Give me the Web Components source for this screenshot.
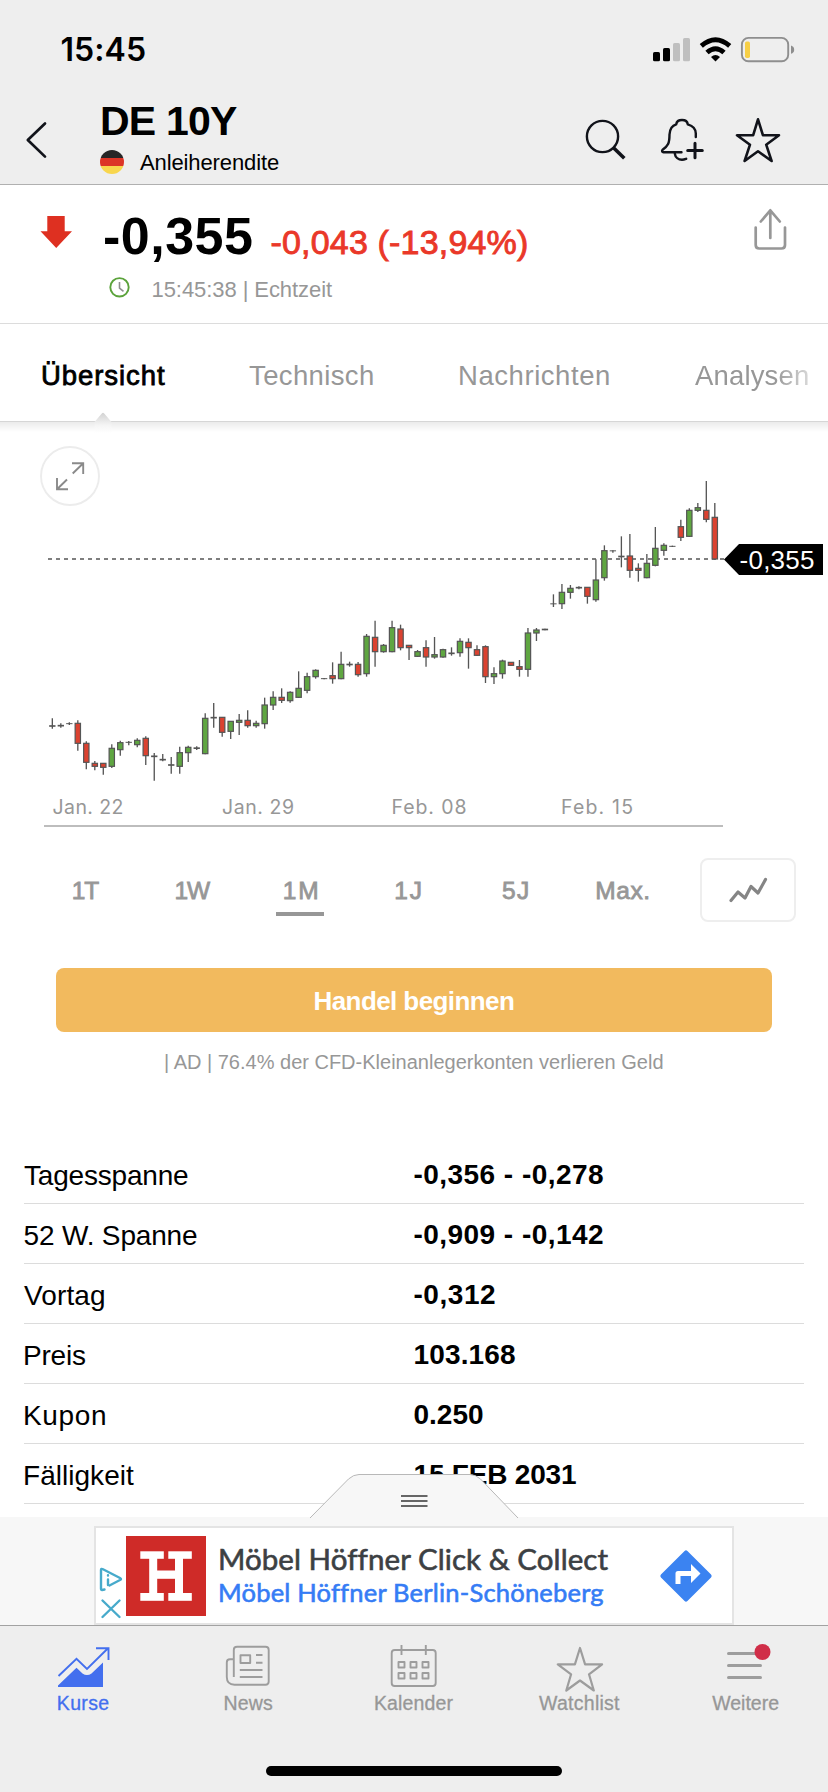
<!DOCTYPE html>
<html lang="de">
<head>
<meta charset="UTF-8">
<meta name="viewport" content="width=device-width">
<title>DE 10Y</title>
<style>
    body{
        margin: 0;
        background: #fff;
        font-family: "Liberation Sans", Arial, sans-serif;
        color: #000;
    }
</style>
</head>
<body>
<quote-app></quote-app>

<script>
// FIT TEXT: spaces one line of text so its ink fills the given width
class FitText extends HTMLElement{

    constructor(){
        super();
        this.attachShadow({mode: 'open'});
    }

    connectedCallback(){
        this.shadowRoot.innerHTML = `
            <style>
                :host{
                    display: block;
                    flex: none;
                    white-space: nowrap;
                }
                span{
                    display: inline-block;
                }
            </style>
            <span><slot></slot></span>
        `;
        this.fit();
    }

    fit(){
        const width = Number(this.getAttribute('width'));
        const text = this.textContent;
        const style = getComputedStyle(this);
        const ctx = document.createElement('canvas').getContext('2d');
        ctx.font = `${style.fontWeight} ${style.fontSize} ${style.fontFamily}`;
        const box = ctx.measureText(text);
        const left = box.actualBoundingBoxLeft / 2;
        const span = this.shadowRoot.querySelector('span');

        this.style.width = `${width}px`;
        span.style.letterSpacing = `${(width - left - box.actualBoundingBoxRight) / (text.length - 1)}px`;
        span.style.marginLeft = `${left}px`;
    }
}

window.customElements.define('fit-text', FitText);

// ----------------------------------------------------------

class StatusBar extends HTMLElement{

    constructor(){
        super();
        this.attachShadow({mode: 'open'});
    }

    connectedCallback(){
        this.shadowRoot.innerHTML = `
            <style>
                :host{
                    display: flex;
                    justify-content: space-between;
                    height: 80px;
                    padding-left: 61px;
                    box-sizing: border-box;
                }
                fit-text{
                    font: 600 32px/60px Inter, sans-serif;
                    padding-top: 20px;
                }
                svg{
                    display: block;
                }
            </style>
            <fit-text width="84">15:45</fit-text>
            <svg width="182" height="80" viewBox="646 0 182 80">
                <rect x="653" y="52" width="7" height="9.3" rx="1.6"/>
                <rect x="663" y="48" width="7" height="13.3" rx="1.6"/>
                <rect x="673" y="43" width="7" height="18.3" rx="1.6" fill="#bfbfbf"/>
                <rect x="683" y="38" width="7" height="23.3" rx="1.6" fill="#bfbfbf"/>
                <g fill="none" stroke="#000" stroke-width="4.8">
                    <path d="M701.3 45.9Q715.5 33.4 729.7 45.9"/>
                    <path d="M707 52.5Q715.5 44.8 724 52.5"/>
                </g>
                <path d="M711 57Q715.5 53 720 57L715.5 61.4Z"/>
                <rect x="741.9" y="37.9" width="46.3" height="23.4" rx="6.5" fill="none" stroke="#8e8e8e" stroke-width="1.9"/>
                <rect x="745" y="41.4" width="5" height="16.6" rx="1.8" fill="#f7cf46"/>
                <path d="M791 45.5Q794.2 46.5 794.2 49.7T791 53.7Z" fill="#8e8e8e"/>
            </svg>
        `;
    }
}

// STATUS BAR
window.customElements.define('status-bar', StatusBar);

// ----------------------------------------------------------

class NavHeader extends HTMLElement{

    constructor(){
        super();
        this.attachShadow({mode: 'open'});
    }

    connectedCallback(){
        this.shadowRoot.innerHTML = `
            <style>
                :host{
                    display: flex;
                    height: 105px;
                    box-sizing: border-box;
                    border-bottom: 1px solid #b0b0b0;
                }
                svg{
                    display: block;
                    flex: none;
                    fill: none;
                    stroke: #11131a;
                    stroke-linecap: round;
                    stroke-linejoin: round;
                }
                .title{
                    flex: 1;
                    padding-top: 18px;
                }
                h1{
                    margin: 0 0 5px;
                    font: bold 41px/46px "Liberation Sans", sans-serif;
                }
                .kind{
                    display: flex;
                    align-items: center;
                    gap: 16px;
                    height: 26px;
                    margin-left: -1px;
                    font-size: 22px;
                    line-height: 27px;
                }
                .flag{
                    width: 24px;
                    height: 24px;
                    border-radius: 50%;
                    background: linear-gradient(#262626 33%, #dc3527 33% 66%, #f8d64d 66%);
                }
            </style>
            <svg width="101" height="104" viewBox="0 80 101 104" stroke-width="2.7">
                <path d="M45 123.5L27.8 140L45 156.6"/>
            </svg>
            <div class="title">
                <h1><fit-text width="136">DE 10Y</fit-text></h1>
                <div class="kind">
                    <div class="flag"></div>
                    <fit-text width="139">Anleiherendite</fit-text>
                </div>
            </div>
            <svg width="248" height="104" viewBox="580 80 248 104" stroke-width="2.4">
                <circle cx="602.5" cy="136.5" r="15.6"/>
                <path d="M613.5 147.8L624.3 158.3" stroke-width="3.6" stroke-linecap="butt"/>
                <path d="M695.8 137V133.6C695.8 128.5 692.5 125.8 687.8 124.4C687.4 121.2 685 120 682 120S676.6 121.2 676.2 124.4C671.5 125.8 669.8 129.500 669.5 134.5C669.5 143.5 668 146 662.6 149.8C661.5 151.3 662.2 152.3 663.5 152.3H681.5"/>
                <path d="M674.8 153.5C675.3 157.5 678.5 159.8 682 159.8C684 159.8 685 159.3 686.2 158.8"/>
                <path d="M695 143.2V157.8M687.7 150.5H702.3" stroke-width="3"/>
                <path d="M758 119.3L762.9 135.2H779L766.2 144.7L771.6 161L758 151.3L744.6 161L750 144.7L737 135.2H753.2Z" stroke-width="2.6"/>
            </svg>
        `;
    }
}

// NAV HEADER
window.customElements.define('nav-header', NavHeader);

// ----------------------------------------------------------

class QuoteSummary extends HTMLElement{

    constructor(){
        super();
        this.attachShadow({mode: 'open'});
    }

    connectedCallback(){
        this.shadowRoot.innerHTML = `
            <style>
                :host{
                    display: flex;
                    height: 139px;
                    box-sizing: border-box;
                    border-bottom: 1px solid #dcdcdc;
                }
                svg{
                    display: block;
                    flex: none;
                }
                .data{
                    flex: 1;
                    padding-top: 21px;
                }
                .price{
                    display: flex;
                    align-items: baseline;
                    gap: 19px;
                    height: 60px;
                    line-height: 60px;
                }
                .last{
                    font-size: 52px;
                    font-weight: bold;
                }
                .change{
                    font-size: 34px;
                    color: #ea3829;
                    -webkit-text-stroke: .9px #ea3829;
                }
                .time{
                    display: flex;
                    align-items: center;
                    gap: 22px;
                    height: 26px;
                    margin: 10px 0 0 5px;
                    font-size: 22px;
                    line-height: 27px;
                    color: #979797;
                }
            </style>
            <svg width="104" height="138" viewBox="0 185 104 138">
                <path d="M47.3 216H64.7V231.3H72L56.2 248L40.5 231.3H47.3Z" fill="#de3021"/>
            </svg>
            <div class="data">
                <div class="price">
                    <fit-text class="last" width="148">-0,355</fit-text>
                    <fit-text class="change" width="256">-0,043 (-13,94%)</fit-text>
                </div>
                <div class="time">
                    <svg width="21" height="26" viewBox="109.5 276 21 26" fill="none" stroke-width="1.9">
                        <circle cx="120" cy="287.3" r="9.2" stroke="#5ba33b"/>
                        <path d="M120 282V288L124 291.300" stroke="#8f8f8f" stroke-width="1.6"/>
                    </svg>
                    <fit-text width="180">15:45:38 | Echtzeit</fit-text>
                </div>
            </div>
            <svg width="88" height="138" viewBox="740 185 88 138" fill="none" stroke="#979797" stroke-width="2.7" stroke-linecap="round" stroke-linejoin="round">
                <path d="M755.7 227.5V245Q755.7 248.5 759.200 248.5H781.500Q785 248.5 785 245V227.5"/>
                <path d="M770.3 238V210.5M760.8 221.500L770.3 210.3L779.8 221.5"/>
            </svg>
        `;
    }
}

// QUOTE SUMMARY
window.customElements.define('quote-summary', QuoteSummary);

// ----------------------------------------------------------

class SectionTabs extends HTMLElement{

    constructor(){
        super();
        this.attachShadow({mode: 'open'});
    }

    connectedCallback(){
        this.shadowRoot.innerHTML = `
            <style>
                :host{
                    display: flex;
                    position: relative;
                    height: 98px;
                    box-sizing: border-box;
                    padding: 36px 0 0 42px;
                    border-bottom: 1px solid #d6d6d6;
                    font-size: 27.5px;
                    line-height: 31px;
                    color: #979797;
                }
                fit-text{
                    margin-right: 86px;
                }
                .active{
                    color: #000;
                    -webkit-text-stroke: .8px #000;
                    margin-right: 84px;
                }
                .last{
                    margin: 0;
                    -webkit-mask-image: linear-gradient(to right, #000 70%, rgba(0, 0, 0, .4));
                    mask-image: linear-gradient(to right, #000 70%, rgba(0, 0, 0, .4));
                }
                svg{
                    position: absolute;
                    left: 93px;
                    top: 87px;
                    z-index: 1;
                }
            </style>
            <fit-text class="active" width="123">Übersicht</fit-text>
            <fit-text width="124">Technisch</fit-text>
            <fit-text width="150">Nachrichten</fit-text>
            <fit-text class="last" width="113">Analysen</fit-text>
            <svg width="20" height="22" viewBox="93 411 20 22">
                <linearGradient id="notch" x1="0" y1="0" x2="0" y2="1">
                    <stop offset="0" stop-color="#d2d2d2"/>
                    <stop offset=".6" stop-color="#f4f4f4"/>
                    <stop offset="1" stop-color="#fff"/>
                </linearGradient>
                <path d="M94.5 422L101.8 413.5Q103 412 104.2 413.5L111.5 422V433H94.5Z" fill="url(#notch)"/>
            </svg>
        `;
    }
}

// SECTION TABS
window.customElements.define('section-tabs', SectionTabs);

// ----------------------------------------------------------

// [index, high, body top, body bottom, low, kind], in thirds of a pixel from the chart top
const CANDLES = [
    [0,865,886,890,896,'d'], [1,880,885,889,893,'d'], [2,877,880,882,885,'t'], [3,871,880,940,962,'r'],
    [4,934,940,997,1018,'r'], [5,993,1000,1009,1021,'r'], [6,1000,1000,1012,1034,'r'], [7,943,955,1009,1014,'g'],
    [8,932,938,959,977,'g'], [9,933,936,938,946,'t'], [10,925,931,944,952,'g'], [11,919,925,977,1005,'r'],
    [12,969,977,981,1052,'d'], [13,972,987,991,994,'d'], [14,981,1003,1007,1031,'d'], [15,950,968,1009,1031,'g'],
    [16,947,952,968,996,'g'], [17,949,953,956,960,'d'], [18,850,865,971,973,'g'], [19,819,861,865,893,'d'],
    [20,862,862,907,920,'r'], [21,874,874,904,927,'g'], [22,852,871,877,915,'g'], [23,841,871,887,893,'r'],
    [24,872,880,887,893,'g'], [25,803,825,881,896,'g'], [26,784,802,825,840,'g'], [27,775,802,811,819,'r'],
    [28,784,787,812,818,'g'], [29,724,775,802,804,'g'], [30,728,740,781,790,'g'], [31,718,721,740,746,'g'],
    [32,744,745,747,748,'t'], [33,697,737,746,761,'r'], [34,665,703,746,748,'g'], [35,695,702,705,710,'d'],
    [36,696,703,734,740,'r'], [37,612,619,731,740,'g'], [38,572,622,665,710,'r'], [39,642,646,665,668,'g'],
    [40,572,593,665,667,'g'], [41,584,597,653,661,'r'], [42,646,646,653,690,'r'], [43,660,665,679,681,'g'],
    [44,631,653,681,710,'r'], [45,621,674,681,686,'g'], [46,656,659,681,683,'g'], [47,652,668,672,677,'d'],
    [48,625,634,668,680,'g'], [49,625,637,653,716,'r'], [50,646,659,676,678,'r'], [51,646,650,740,759,'r'],
    [52,712,731,740,762,'g'], [53,689,693,731,746,'g'], [54,697,697,706,708,'r'], [55,690,710,718,740,'r'],
    [56,594,609,718,740,'g'], [57,594,600,609,633,'g'], [58,596,596,601,601,'d'], [59,493,520,523,531,'t'],
    [60,462,487,521,537,'g'], [61,465,475,487,506,'g'], [62,469,471,475,478,'d'], [63,472,472,499,521,'r'],
    [64,388,450,509,515,'g'], [65,346,362,443,452,'g'], [66,361,361,364,368,'t'], [67,319,378,381,412,'d'],
    [68,312,378,421,443,'r'], [69,400,415,421,455,'r'], [70,372,400,443,445,'g'], [71,291,355,406,409,'g'],
    [72,340,346,361,377,'g'], [73,347,348,350,351,'t'], [74,269,290,322,333,'r'], [75,235,241,319,321,'g'],
    [76,219,233,241,246,'g'], [77,153,241,268,277,'r'], [78,219,262,387,389,'r']
];

class CandleChart extends HTMLElement{

    constructor(){
        super();
        this.attachShadow({mode: 'open'});
    }

    connectedCallback(){
        this.render(CANDLES.map(this.candle).join(''));
    }

    candle([index, high, top, bottom, low, kind]){
        const x = 157 + index * 25.48;
        const fill = {g: '#5fa641', r: '#db4230'}[kind];
        const wick = `<path d="M${x} ${high}V${low}" stroke-width="4"/>`;
        if(!fill){
            const size = kind === 't' ? 3 : 5;
            return `${wick}<path d="M${x - 9.5} ${(top + bottom) / 2}h19" stroke-width="${size}"/>`;
        }
        return `${wick}<rect x="${x - 8}" y="${top}" width="16" height="${bottom - top}" fill="${fill}" stroke-width="3.6"/>`;
    }

    render(candles){
        this.shadowRoot.innerHTML = `
            <style>
                :host{
                    display: block;
                    height: 436px;
                    background: linear-gradient(#ebebeb, #fff 10px);
                }
                svg{
                    display: block;
                }
                .dates{
                    font: 19.5px Inter, sans-serif;
                    fill: #979797;
                }
                .tag{
                    font: 26px "Liberation Sans", sans-serif;
                    fill: #fff;
                }
            </style>
            <svg width="828" height="436" viewBox="0 422 828 436">
                <circle cx="70" cy="476" r="29" fill="#fff" stroke="#ececec" stroke-width="1.9"/>
                <path d="M72 463.2H83.2V474M83 463.5L72.7 473.5M57 478V489.2H68M57.3 489L67 479.5" fill="none" stroke="#8a8a8a" stroke-width="1.9"/>
                <path d="M48 559H725" stroke="#555" stroke-width="1.7" stroke-dasharray="4 4"/>
                <g transform="translate(0 430) scale(.33333)" stroke="#555">${candles}</g>
                <path d="M724 559.5L739 544H823V575H739Z"/>
                <text class="tag" x="739.5" y="569" textLength="75">-0,355</text>
                <g class="dates">
                    <text x="52.5" y="814" textLength="71">Jan. 22</text>
                    <text x="222" y="814" textLength="72">Jan. 29</text>
                    <text x="391.5" y="814" textLength="75">Feb. 08</text>
                    <text x="561" y="814" textLength="72">Feb. 15</text>
                </g>
                <path d="M44 826H723" stroke="#bdbdbd" stroke-width="2"/>
            </svg>
        `;
    }
}

// CANDLE CHART
window.customElements.define('candle-chart', CandleChart);

// ----------------------------------------------------------

class PeriodPicker extends HTMLElement{

    constructor(){
        super();
        this.attachShadow({mode: 'open'});
    }

    connectedCallback(){
        this.shadowRoot.innerHTML = `
            <style>
                :host{
                    display: flex;
                    height: 64px;
                    padding: 0 32px;
                    color: #979797;
                    font-size: 24.5px;
                    line-height: 65px;
                    -webkit-text-stroke: .8px #979797;
                }
                div{
                    position: relative;
                    flex: 1;
                    display: flex;
                    justify-content: center;
                }
                .active::after{
                    content: "";
                    position: absolute;
                    top: 54px;
                    width: 48px;
                    height: 4px;
                    background: #979797;
                }
                button{
                    width: 96px;
                    height: 64px;
                    margin: 0 0 0 24px;
                    padding: 0;
                    border: 2px solid #eee;
                    border-radius: 8px;
                    background: #fff;
                }
                svg{
                    display: block;
                }
            </style>
            <div><fit-text width="27">1T</fit-text></div>
            <div><fit-text width="36">1W</fit-text></div>
            <div class="active"><fit-text width="34">1M</fit-text></div>
            <div><fit-text width="26">1J</fit-text></div>
            <div><fit-text width="26">5J</fit-text></div>
            <div><fit-text width="52">Max.</fit-text></div>
            <button>
                <svg width="92" height="60" viewBox="702 860 92 60">
                    <path d="M731 900.5L738 892L745 898L751 886.5L758 893L765.5 879.5" fill="none" stroke="#858585" stroke-width="3.2" stroke-linecap="round" stroke-linejoin="round"/>
                </svg>
            </button>
        `;
    }
}

// PERIOD PICKER
window.customElements.define('period-picker', PeriodPicker);

// ----------------------------------------------------------

class TradeOffer extends HTMLElement{

    constructor(){
        super();
        this.attachShadow({mode: 'open'});
    }

    connectedCallback(){
        this.shadowRoot.innerHTML = `
            <style>
                :host{
                    display: flex;
                    flex-direction: column;
                    align-items: center;
                    gap: 18px;
                    padding: 46px 56px 70px;
                }
                .button{
                    display: flex;
                    justify-content: center;
                    align-self: stretch;
                    height: 64px;
                    border-radius: 8px;
                    background: #f2ba5e;
                    color: #fff;
                    font-size: 26px;
                    font-weight: bold;
                    line-height: 66px;
                }
                .note{
                    font-size: 20px;
                    line-height: 24px;
                    color: #979797;
                }
            </style>
            <div class="button"><fit-text width="200">Handel beginnen</fit-text></div>
            <fit-text class="note" width="499">| AD | 76.4% der CFD-Kleinanlegerkonten verlieren Geld</fit-text>
        `;
    }
}

// TRADE OFFER
window.customElements.define('trade-offer', TradeOffer);

// ----------------------------------------------------------

class DataRow extends HTMLElement{

    constructor(){
        super();
        this.attachShadow({mode: 'open'});
    }

    connectedCallback(){
        const label = this.getAttribute('label');
        const value = this.getAttribute('value');
        const [labelWidth, valueWidth] = this.getAttribute('widths').split(' ');

        this.render(label, value, labelWidth, valueWidth);
    }

    render(label, value, labelWidth, valueWidth){
        this.shadowRoot.innerHTML = `
            <style>
                :host{
                    display: grid;
                    grid-template-columns: 390px 1fr;
                    height: 60px;
                    margin: 0 24px;
                    box-sizing: border-box;
                    border-bottom: 1px solid #dcdcdc;
                    font-size: 28px;
                    line-height: 62px;
                }
                .label{
                    padding-top: 1px;
                }
                .value{
                    font-weight: bold;
                }
            </style>
            <fit-text class="label" width="${labelWidth}">${label}</fit-text>
            <fit-text class="value" width="${valueWidth}">${value}</fit-text>
        `;
    }
}

// DATA ROW
window.customElements.define('data-row', DataRow);

// ----------------------------------------------------------

class AdBanner extends HTMLElement{

    constructor(){
        super();
        this.attachShadow({mode: 'open'});
    }

    connectedCallback(){
        this.shadowRoot.innerHTML = `
            <style>
                :host{
                    display: block;
                    position: relative;
                    height: 108px;
                    box-sizing: border-box;
                    padding: 9px 94px 0;
                    background: #f7f7f7;
                }
                .handle{
                    position: absolute;
                    left: 308px;
                    top: -44px;
                }
                .box{
                    display: flex;
                    height: 99px;
                    box-sizing: border-box;
                    border: 2px solid #e4e4e4;
                    background: #fff;
                    font-family: Lato, sans-serif;
                }
                svg{
                    display: block;
                    flex: none;
                }
                .text{
                    flex: 1;
                    padding-top: 13px;
                }
                .title{
                    font-size: 29.5px;
                    line-height: 36px;
                    color: #3c4043;
                    -webkit-text-stroke: .6px #3c4043;
                }
                .place{
                    font-size: 25.5px;
                    line-height: 31px;
                    color: #357cf5;
                    -webkit-text-stroke: .6px #357cf5;
                }
            </style>
            <svg class="handle" width="212" height="45" viewBox="308 1473 212 45">
                <path d="M310 1518L348.5 1479Q353.5 1474.5 359 1474.5H470Q475.5 1474.5 480.5 1479L518 1518" fill="#f7f7f7" stroke="#b8b8b8"/>
                <path d="M401 1496H427.5M401 1501H427.5M401 1506H427.5" stroke="#666" stroke-width="1.9"/>
            </svg>
            <div class="box">
                <svg width="123" height="94" viewBox="96 1528 123 94">
                    <g fill="none" stroke="#47aacb" stroke-width="2.4" stroke-linecap="round" stroke-linejoin="round">
                        <path d="M104.5 1589.5L102 1590Q101 1590 101 1588.5V1570Q101 1568.2 103 1569.2L120 1578Q122 1579 120 1580L109.5 1585.5"/>
                        <path d="M108 1579.5V1585M108 1575.3V1575.5"/>
                        <path d="M102.5 1600.5L119.5 1617M119.5 1600.5L102.5 1617"/>
                    </g>
                    <rect x="126" y="1536" width="80" height="80" fill="#cf2b28"/>
                    <g fill="#fff">
                        <rect x="140.3" y="1551.3" width="23.5" height="7.5"/>
                        <rect x="168.3" y="1551.3" width="23.5" height="7.5"/>
                        <rect x="149.2" y="1552" width="8" height="48"/>
                        <rect x="175" y="1552" width="8" height="48"/>
                        <rect x="156" y="1570.5" width="20" height="8.3"/>
                        <rect x="140.3" y="1593" width="23.5" height="7.8"/>
                        <rect x="168.3" y="1593" width="23.5" height="7.8"/>
                    </g>
                </svg>
                <div class="text">
                    <fit-text class="title" width="389">Möbel Höffner Click &amp; Collect</fit-text>
                    <fit-text class="place" width="384">Möbel Höffner Berlin-Schöneberg</fit-text>
                </div>
                <svg width="82" height="94" viewBox="650 1528 82 94">
                    <rect x="667.3" y="1557.3" width="37.4" height="37.4" rx="2" transform="rotate(45 686 1576)" fill="#3b83f1"/>
                    <path d="M675.5 1584V1573.5Q675.5 1571 678 1571H691V1564L700.5 1573.5L691 1583V1576H680.5V1584Z" fill="#fff"/>
                </svg>
            </div>
        `;
    }
}

// AD BANNER
window.customElements.define('ad-banner', AdBanner);

// ----------------------------------------------------------

class TabItem extends HTMLElement{

    constructor(){
        super();
        this.attachShadow({mode: 'open'});
    }

    connectedCallback(){
        const label = this.getAttribute('label');
        const width = this.getAttribute('width');

        this.shadowRoot.innerHTML = `
            <style>
                :host{
                    display: flex;
                    flex: 1;
                    flex-direction: column;
                    align-items: center;
                    padding-top: 14px;
                    font-size: 19.5px;
                    line-height: 24px;
                    -webkit-text-stroke: .3px currentColor;
                }
            </style>
            <slot></slot>
            <fit-text width="${width}">${label}</fit-text>
        `;
    }
}

// TAB ITEM
window.customElements.define('tab-item', TabItem);

// ----------------------------------------------------------

class TabBar extends HTMLElement{

    constructor(){
        super();
        this.attachShadow({mode: 'open'});
    }

    connectedCallback(){
        this.shadowRoot.innerHTML = `
            <style>
                :host{
                    display: flex;
                    flex-direction: column;
                    align-items: center;
                    justify-content: space-between;
                    height: 167px;
                    box-sizing: border-box;
                    padding-bottom: 16px;
                    border-top: 1px solid #a2a2a2;
                    background: #eee;
                    color: #979797;
                }
                nav{
                    display: flex;
                    align-self: stretch;
                }
                tab-item:first-child{
                    color: #436fee;
                }
                svg{
                    display: block;
                    fill: none;
                    stroke: #9d9d9d;
                    stroke-width: 1.9;
                    stroke-linejoin: round;
                }
                .kurse{
                    stroke: #436fee;
                    stroke-linejoin: miter;
                }
                .star{
                    stroke-width: 2.2;
                    margin-bottom: -1px;
                }
                .home{
                    width: 296px;
                    height: 10px;
                    border-radius: 5px;
                    background: #000;
                }
            </style>
            <nav>
                <tab-item label="Kurse" width="51">
                    <svg class="kurse" width="60" height="51" viewBox="53 1640 60 51">
                        <path d="M58.5 1676L76.5 1658.8L87 1669L108 1648.3M96 1648.2H108.5V1660"/>
                        <path d="M58 1687V1685.5L76.5 1667.8L82.5 1673.5Q87 1676.5 91.5 1673.5L103 1662.5V1687Z" fill="#436fee" stroke="none"/>
                    </svg>
                </tab-item>
                <tab-item label="News" width="49">
                    <svg width="60" height="51" viewBox="218.5 1640 60 51">
                        <path d="M234.3 1677V1650Q234.3 1646.8 237.5 1646.8H266Q269.2 1646.8 269.2 1650V1681.5Q269.2 1684.7 266 1684.7H235Q227.3 1684.7 227.3 1677V1662.5Q227.3 1659.3 230.5 1659.3H234"/>
                        <path d="M241 1655.2H250.7V1663H241ZM256.5 1655H263M256.5 1662.7H263M240.3 1670H263M240.3 1677H263"/>
                    </svg>
                </tab-item>
                <tab-item label="Kalender" width="79">
                    <svg width="60" height="51" viewBox="383.5 1640 60 51">
                        <rect x="391.2" y="1650" width="44" height="36" rx="3"/>
                        <path d="M401 1645V1655M425.3 1645V1655"/>
                        <path d="M398 1662h6v5.5h-6ZM410 1662h6v5.5h-6ZM422 1662h6v5.5h-6ZM398 1673h6v5.5h-6ZM410 1673h6v5.5h-6ZM422 1673h6v5.5h-6Z"/>
                    </svg>
                </tab-item>
                <tab-item label="Watchlist" width="81">
                    <svg class="star" width="60" height="52" viewBox="548.7 1640 60 52">
                        <path d="M578.7 1648L583.8 1664.3H600.8L587.7 1674.3L592.5 1690.5L578.7 1680.5L565 1690.5L569.8 1674.3L556.5 1664.3H573.6Z"/>
                    </svg>
                </tab-item>
                <tab-item label="Weitere" width="66">
                    <svg width="60" height="51" viewBox="714.5 1640 60 51">
                        <path d="M728 1653.5H760M728 1665.5H760M728 1677.5H760" stroke-width="3" stroke-linecap="round"/>
                        <circle cx="762" cy="1652" r="8" fill="#d02e48" stroke="none"/>
                    </svg>
                </tab-item>
            </nav>
            <div class="home"></div>
        `;
    }
}

// TAB BAR
window.customElements.define('tab-bar', TabBar);

// ----------------------------------------------------------

class QuoteApp extends HTMLElement{

    constructor(){
        super();
        this.attachShadow({mode: 'open'});
    }

    connectedCallback(){
        this.shadowRoot.innerHTML = `
            <style>
                :host{
                    display: flex;
                    flex-direction: column;
                    width: 828px;
                    height: 1792px;
                    overflow: hidden;
                }
                header{
                    background: #eee;
                }
                .rows{
                    flex: 1;
                }
            </style>
            <header>
                <status-bar></status-bar>
                <nav-header></nav-header>
            </header>
            <quote-summary></quote-summary>
            <section-tabs></section-tabs>
            <candle-chart></candle-chart>
            <period-picker></period-picker>
            <trade-offer></trade-offer>
            <div class="rows">
                <data-row label="Tagesspanne" value="-0,356 - -0,278" widths="164 189"></data-row>
                <data-row label="52 W. Spanne" value="-0,909 - -0,142" widths="173 189"></data-row>
                <data-row label="Vortag" value="-0,312" widths="80 81"></data-row>
                <data-row label="Preis" value="103.168" widths="61 101"></data-row>
                <data-row label="Kupon" value="0.250" widths="81 69"></data-row>
                <data-row label="Fälligkeit" value="15 FEB 2031" widths="110 162"></data-row>
            </div>
            <ad-banner></ad-banner>
            <tab-bar></tab-bar>
        `;
    }
}

// QUOTE APP
window.customElements.define('quote-app', QuoteApp);
</script>
</body>
</html>
